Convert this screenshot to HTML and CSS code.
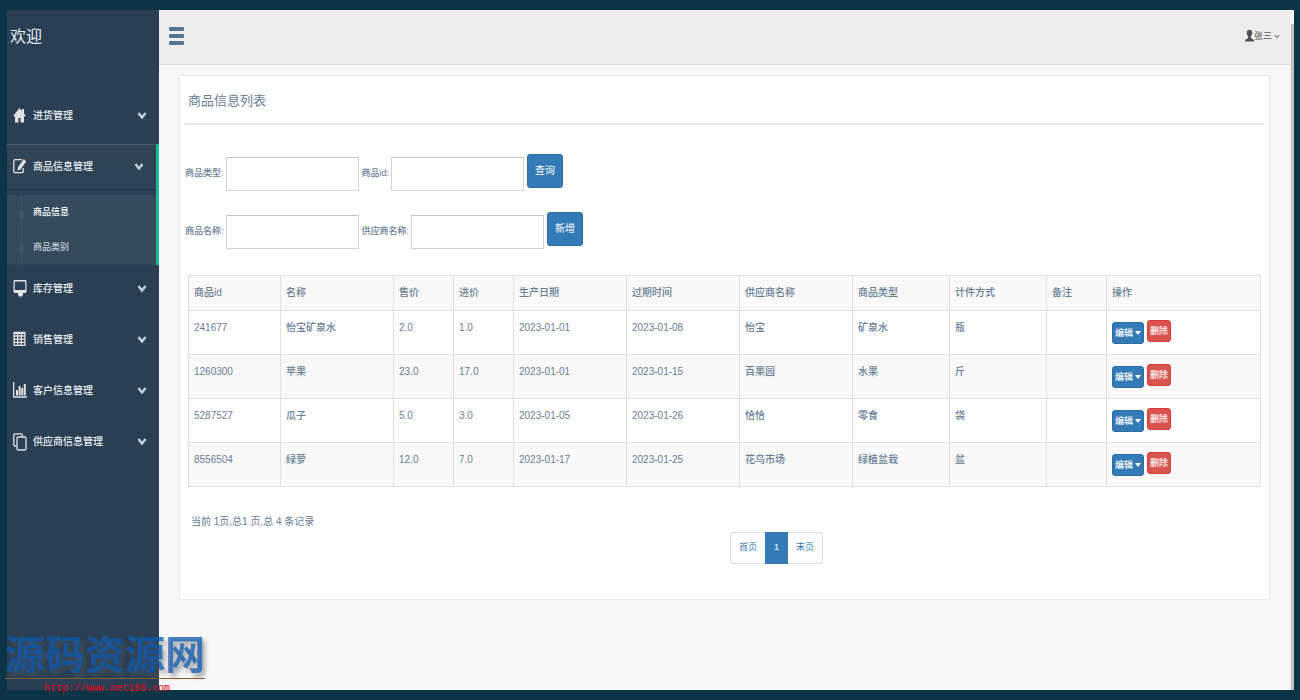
FILE: index.html
```html
<!DOCTYPE html>
<html lang="zh-CN">
<head>
<meta charset="utf-8">
<title>商品信息列表</title>
<link rel="stylesheet" href="styles.css">
</head>
<body>
<svg class="defs" aria-hidden="true">
  <symbol id="chev" viewBox="0 0 10 8"><path d="M1.500 1 5 5.500 8.500 1" fill="none" stroke="currentColor" stroke-width="2.400"/></symbol>
</svg>
<div class="app">
  <aside class="sidebar">
    <h1 class="welcome">欢迎</h1>
    <nav>
      <ul class="menu">
        <li><a class="menu-link" href="#"><svg class="icon" viewBox="0 0 14 18"><path d="M6.500 1 .3 8.800l1 1L2 9v6.500h3.500V11h2v4.500H11V9l.7.800 1-1L11 6.500V2H9v2z" fill="currentColor"/></svg><span>进货管理</span><svg class="chev"><use href="#chev"/></svg></a></li>
        <li class="active"><a class="menu-link" href="#"><svg class="icon" viewBox="0 0 14 18"><path d="M9 1.700H2.500Q.8 1.700.8 3.700v9q0 2 1.700 2h6q1.700 0 1.700-2V10" fill="none" stroke="currentColor" stroke-width="1.300"/><path d="M10.800 1 13.200 3.500 7.500 11.500l-3 1 .6-3.600z" fill="currentColor"/></svg><span>商品信息管理</span><svg class="chev"><use href="#chev"/></svg></a>
          <ul class="submenu">
            <li class="current"><a href="#">商品信息</a></li>
            <li><a href="#">商品类别</a></li>
          </ul>
        </li>
        <li><a class="menu-link" href="#"><svg class="icon" viewBox="0 0 14 18"><path d="M1.700 0h10.600q1.200 0 1.200 1.400v10.200q0 1.400-1.200 1.400H10v2l-1 1.500H6L5 15v-2H1.700Q.5 13 .5 11.600V1.400Q.5 0 1.700 0zm.1 1.400v8.600h10.400V1.400z" fill="currentColor" fill-rule="evenodd"/></svg><span>库存管理</span><svg class="chev"><use href="#chev"/></svg></a></li>
        <li><a class="menu-link" href="#"><svg class="icon" viewBox="0 0 14 18"><path d="M1.100 1.500h10.800V14.400H1.100zM1 5h11M1 8.200h11M1 11.400h11M4.700 2v12M8.300 2v12" fill="none" stroke="currentColor" stroke-width="1.300"/><path d="M1 1h11v2H1z" fill="currentColor"/></svg><span>销售管理</span><svg class="chev"><use href="#chev"/></svg></a></li>
        <li><a class="menu-link" href="#"><svg class="icon" viewBox="0 0 14 18"><path d="M.7 0v15H14" fill="none" stroke="currentColor" stroke-width="1.300"/><path d="M3 8h2v5.500H3zm2.600-4h2v9.500h-2zm2.600 2h2v7.500h-2zm2.600-4h2v11.500h-2z" fill="currentColor"/></svg><span>客户信息管理</span><svg class="chev"><use href="#chev"/></svg></a></li>
        <li><a class="menu-link" href="#"><svg class="icon" viewBox="0 0 14 18"><path d="M3.500 13H2q-1.200 0-1.200-1.300V2.200Q.8.900 2 .9h6.200q1.200 0 1.200 1.300v1.500" fill="none" stroke="currentColor" stroke-width="1.300"/><rect x="4" y="4" width="9" height="13" rx="1.200" fill="none" stroke="currentColor" stroke-width="1.300"/></svg><span>供应商信息管理</span><svg class="chev"><use href="#chev"/></svg></a></li>
      </ul>
    </nav>
  </aside>
  <div class="page">
    <header class="topbar">
      <button class="toggle" type="button" aria-label="菜单"><i></i><i></i><i></i></button>
      <a class="user" href="#"><svg class="user-icon" viewBox="0 0 10 14"><path d="M5 0C7 0 8 1.400 8 3.500 8 5.500 7.300 6.600 6.600 7.400v2L9 10.500q1 .5 1 2.500H0q0-2 1-2.500l2.400-1.100v-2C2.700 6.600 2 5.500 2 3.500 2 1.400 3 0 5 0z" fill="currentColor"/></svg><span>张三</span><svg class="user-chev" viewBox="0 0 6 5"><path d="M.8 1 3 3.700 5.200 1" fill="none" stroke="currentColor"/></svg></a>
    </header>
    <main class="content">
      <section class="panel">
        <h2 class="panel-title">商品信息列表</h2>
        <form class="filters">
          <div class="filter-row">
            <label class="field"><span>商品类型:</span><input type="text"></label>
            <label class="field"><span>商品id:</span><input type="text"></label>
            <button class="btn" type="button">查询</button>
          </div>
          <div class="filter-row">
            <label class="field"><span>商品名称:</span><input type="text"></label>
            <label class="field"><span>供应商名称:</span><input type="text"></label>
            <button class="btn" type="button">新增</button>
          </div>
        </form>
        <table class="goods">
          <colgroup><col class="c-id"><col class="c-wide"><col class="c-price"><col class="c-price"><col class="c-wide"><col class="c-wide"><col class="c-wide"><col class="c-mid"><col class="c-mid"><col class="c-price"><col></colgroup>
          <thead>
            <tr><th>商品id</th><th>名称</th><th>售价</th><th>进价</th><th>生产日期</th><th>过期时间</th><th>供应商名称</th><th>商品类型</th><th>计件方式</th><th>备注</th><th>操作</th></tr>
          </thead>
          <tbody>
            <tr><td>241677</td><td>怡宝矿泉水</td><td>2.0</td><td>1.0</td><td>2023-01-01</td><td>2023-01-08</td><td>怡宝</td><td>矿泉水</td><td>瓶</td><td></td><td><div class="actions"><button class="edit" type="button">编辑<i></i></button><button class="del" type="button">删除</button></div></td></tr>
            <tr><td>1260300</td><td>苹果</td><td>23.0</td><td>17.0</td><td>2023-01-01</td><td>2023-01-15</td><td>百果园</td><td>水果</td><td>斤</td><td></td><td><div class="actions"><button class="edit" type="button">编辑<i></i></button><button class="del" type="button">删除</button></div></td></tr>
            <tr><td>5287527</td><td>瓜子</td><td>5.0</td><td>3.0</td><td>2023-01-05</td><td>2023-01-26</td><td>恰恰</td><td>零食</td><td>袋</td><td></td><td><div class="actions"><button class="edit" type="button">编辑<i></i></button><button class="del" type="button">删除</button></div></td></tr>
            <tr><td>8556504</td><td>绿萝</td><td>12.0</td><td>7.0</td><td>2023-01-17</td><td>2023-01-25</td><td>花鸟市场</td><td>绿植盆栽</td><td>盆</td><td></td><td><div class="actions"><button class="edit" type="button">编辑<i></i></button><button class="del" type="button">删除</button></div></td></tr>
          </tbody>
        </table>
        <p class="summary">当前 1页,总1 页,总 4 条记录</p>
        <nav class="pager"><a href="#">首页</a><a class="on" href="#">1</a><a href="#">末页</a></nav>
      </section>
    </main>
  </div>
  <div class="scrollbar"></div>
</div>
<div class="watermark"><strong>源码资源网</strong><span>http://www.net188.com</span></div>
</body>
</html>
```
FILE: styles.css
```css
* { box-sizing: border-box; }
body {
  margin: 0;
  min-height: 100vh;
  padding: 10px 6px 10px 7px;
  display: flex;
  background: #0b3446;
  color: #687e95;
  font: 10px/16px "Liberation Sans Narrow", "Liberation Sans", "Noto Sans CJK SC", sans-serif;
}
a { color: inherit; text-decoration: none; }
ul { list-style: none; margin: 0; padding: 0; }
button, input { font: inherit; }
.defs { position: absolute; width: 0; height: 0; }

.app { flex: 1; display: flex; background: #f7f7f7; }

.sidebar { width: 152px; flex: none; background: #2a3f54; color: #e7ecf0; }
.welcome { margin: 0; padding: 13px 3px 0; height: 82px; font-size: 16px; line-height: 28px; font-weight: 400; }
.menu-link { display: flex; align-items: center; height: 51px; padding: 0 12px 4px 6px; font-weight: 500; }
.icon { width: 14px; height: 18px; margin-right: 6px; color: #e2e2e2; }
.chev { width: 10px; height: 8px; margin-left: auto; color: #c4cfda; }
.active { margin-top: 1px; border-right: 3px solid #1abb9c; }
.active .menu-link {
  height: 46px;
  padding-bottom: 0;
  background: linear-gradient(#334556, #2c4257);
  border-top: 1px solid #4d5e70;
  border-bottom: 1px solid #1f3245;
}
.submenu { margin-top: 5px; background: #364a5e; }
.submenu li { position: relative; padding-left: 26px; line-height: 34px; height: 35px; font-size: 9px; font-weight: 500; }
.submenu li::before { content: ""; position: absolute; left: 14px; top: 0; bottom: 0; border-left: 1px solid #425668; }
.submenu li::after { content: ""; position: absolute; left: 12px; top: 15px; width: 5px; height: 8px; border-radius: 50%; background: #425668; }
.submenu a { color: #c5ced6; }
.submenu .current a { color: #fff; }

.page { flex: 1; min-width: 0; }
.topbar { height: 55px; display: flex; justify-content: space-between; align-items: flex-start; padding: 16px 10px 0; background: #ededed; border-bottom: 1px solid #d9dee4; }
.toggle { display: flex; flex-direction: column; gap: 3px; padding: 1px 0 0; border: 0; background: none; }
.toggle i { width: 15px; height: 4px; border-radius: 1px; background: #5a738e; }
.user { display: flex; align-items: center; height: 20px; color: #515356; font-size: 9px; }
.user-icon { width: 9px; height: 14px; }
.user-chev { width: 6px; height: 5px; margin-left: 2px; }

.content { padding: 10px 20px 0 20px; }
.panel { min-height: 525px; padding: 11px 5px; background: #fff; border: 1px solid #e6e9ed; }
.panel-title { margin: 0; padding: 0 3px; height: 38px; border-bottom: 2px solid #e6e9ed; font-size: 13px; line-height: 28px; font-weight: 400; }
.filters { display: flex; flex-direction: column; gap: 24px; padding-top: 29px; font-size: 9px; }
.filter-row { display: flex; align-items: flex-start; gap: 3px; height: 34px; }
.field { display: flex; align-items: center; gap: 2px; padding-top: 3px; font-weight: 500; }
.field span { padding-bottom: 2px; }
.field input { width: 133px; height: 34px; border: 1px solid #d4d4d4; border-top-color: #c4c4c4; padding: 0 6px; background: #fff; }
.btn { width: 36px; height: 34px; padding: 0; border: 1px solid #2e6da4; border-radius: 3px; background: #337ab7; color: #fff; font-size: 10px; }

.goods { width: calc(100% - 6px); margin: 29px 3px 0; table-layout: fixed; border-collapse: collapse; font-weight: 500; }
.c-id { width: 92px; }
.c-wide { width: 113px; }
.c-price { width: 60px; }
.c-mid { width: 97px; }
.goods th, .goods td { border: 1px solid #e0e0e0; padding: 9px 5px 0; text-align: left; vertical-align: top; font-weight: 500; }
.goods th { height: 35px; background: #f9f9f9; }
.goods td { height: 44px; }
.goods tbody tr:nth-child(even) { background: #f9f9f9; }
.actions { display: flex; gap: 3px; align-items: flex-start; }
.edit, .del { height: 22px; padding: 0 2px; border: 1px solid #2e6da4; border-radius: 3px; color: #fff; font-size: 9px; line-height: 20px; white-space: nowrap; }
.edit { display: flex; align-items: center; gap: 2px; margin-top: 2px; background: #337ab7; }
.edit i { border: 3px solid transparent; border-top: 4px solid #fff; border-bottom: 0; }
.del { background: #d9534f; border-color: #d43f3a; }

.summary { margin: 27px 6px 2px; }
.pager { display: flex; justify-content: center; padding-left: 104px; color: #337ab7; font-size: 9px; }
.pager a { height: 32px; padding: 0 8px; line-height: 29px; border: 1px solid #ddd; background: #fff; }
.pager a:first-child { border-right: 0; border-radius: 3px 0 0 3px; }
.pager a:last-child { border-left: 0; border-radius: 0 3px 3px 0; }
.pager .on { background: #337ab7; border-color: #337ab7; color: #fff; }

.scrollbar { width: 4px; margin: 14px 0 0; background: #c1c1c1; border-left: 1px solid #e8e8e8; }

.watermark { position: absolute; left: 5px; bottom: 4px; width: 200px; color: #e60012; pointer-events: none; }
.watermark strong { display: block; height: 46px; border-bottom: 1px solid #8a6030; font: 700 40px/39px "Noto Sans CJK SC", sans-serif; color: rgba(13, 89, 174, .77); text-shadow: 3px 4px 4px rgba(90, 90, 90, .5); }
.watermark span { display: block; padding: 2px 0 0 39px; font: 10px/15px "Liberation Mono", monospace; }
```
